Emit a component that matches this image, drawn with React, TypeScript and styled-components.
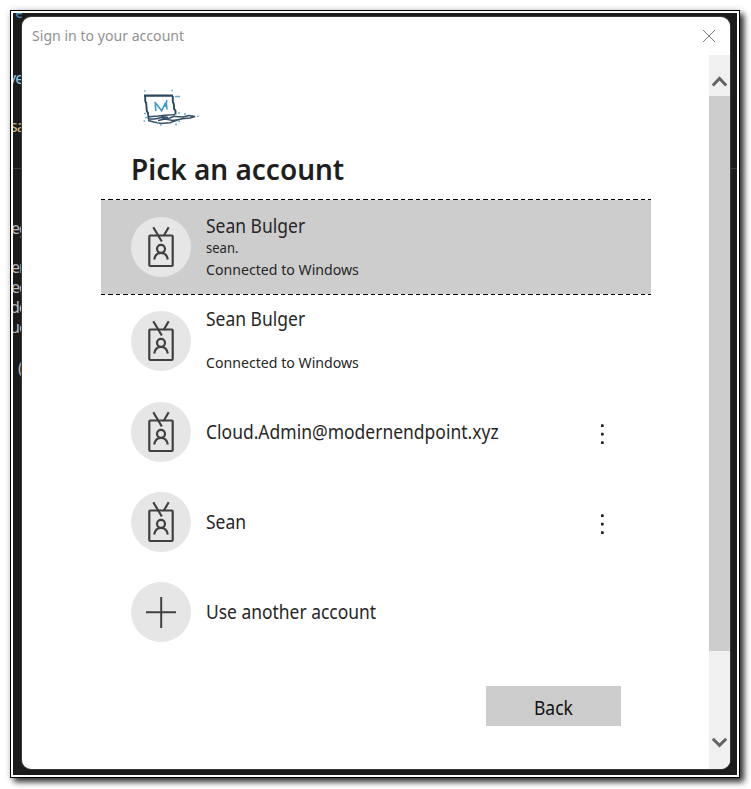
import React from "react";
import styled, { createGlobalStyle } from "styled-components";

const GlobalStyle = createGlobalStyle`
  *, *::before, *::after { box-sizing: border-box; }
  body { margin: 0; background: #fff; font-family: "Noto Sans", "Open Sans", sans-serif; color: #262626; }
  svg { display: block; }
`;

const Page = styled.div`
  width: 751px;
  height: 789px;
  padding: 10px 0 0 10px;
  overflow: hidden;
`;

const Frame = styled.div`
  width: 730px;
  height: 768px;
  padding: 2px;
  border: 1px solid #000;
  background: #fff;
  box-shadow: 4px 4px 6px rgba(0, 0, 0, 0.8), 0 0 7px rgba(0, 0, 0, 0.16);
`;

const Desktop = styled.div`
  display: grid;
  grid-template-columns: 9px 708px 7px;
  height: 762px;
  background: linear-gradient(#1b1b1b, #1b1b1b 155px, #3c3c3c 155px, #3c3c3c 156px, #1b1b1b 156px);
`;

const CodeEdge = styled.div`
  overflow: hidden;
`;

const Fragment = styled.div<{ $gap: number; $shift: number; $color?: string }>`
  margin-top: ${(p) => p.$gap}px;
  margin-left: ${(p) => p.$shift}px;
  height: 20px;
  font: 16px/20px "Noto Sans", sans-serif;
  letter-spacing: -1px;
  white-space: nowrap;
  color: ${(p) => p.$color ?? "#b9b9b9"};
`;

const Dialog = styled.section`
  display: flex;
  flex-direction: column;
  height: 752px;
  margin-top: 4px;
  border-radius: 9px;
  background: #fff;
  box-shadow: 0 0 0 1px #393939;
  overflow: hidden;
`;

const TitleBar = styled.header`
  display: flex;
  align-items: center;
  justify-content: space-between;
  flex: none;
  height: 38px;
  padding: 0 15px 0 10px;
  color: #919191;
`;

const Text = styled.div<{ $size: number; $line: number; $scale: number; $weight?: number }>`
  width: max-content;
  font-size: ${(p) => p.$size}px;
  line-height: ${(p) => p.$line}px;
  font-weight: ${(p) => p.$weight ?? 400};
  white-space: nowrap;
  transform: scaleX(${(p) => p.$scale});
  transform-origin: left center;
`;

const TitleText = styled(Text)`
  margin-top: -2px;
`;

const Body = styled.div`
  display: flex;
  flex: 1;
`;

const Content = styled.main`
  width: 687px;
  padding: 34px 58px 0 79px;
`;

const Heading = styled.div`
  margin: 23px 0 0 30px;
  height: 49px;
  color: #1f1f1f;
`;

const Logo = styled.div`
  margin-left: 38px;
`;

const Tile = styled.div<{ $height: number; $selected?: boolean }>`
  display: flex;
  align-items: center;
  height: ${(p) => p.$height}px;
  padding-left: 30px;
  padding-right: 46px;
  background: ${(p) =>
    p.$selected
      ? `repeating-linear-gradient(90deg, #000 0 4.5px, #fff 4.5px 7.5px) top / 100% 1px no-repeat,
         repeating-linear-gradient(90deg, #000 0 4.5px, #fff 4.5px 7.5px) bottom / 100% 1px no-repeat, #cdcdcd`
      : "transparent"};
`;

const Avatar = styled.div`
  display: grid;
  place-items: center;
  flex: none;
  width: 60px;
  height: 60px;
  margin-right: 15px;
  border-radius: 50%;
  background: #e6e6e6;
`;

const Details = styled.div`
  flex: 1;
`;

const EmptyLine = styled.div`
  height: 20px;
`;

const Actions = styled.footer`
  display: flex;
  justify-content: flex-end;
  padding: 29px 30px 0 0;
`;

const Button = styled.button`
  display: flex;
  justify-content: center;
  align-items: center;
  width: 135px;
  height: 40px;
  padding: 3px 0 0 4px;
  border: 0;
  background: #ccc;
  color: #111;
  font-family: inherit;
`;

const Scrollbar = styled.div`
  display: flex;
  flex-direction: column;
  justify-content: space-between;
  width: 21px;
  background: #f0f0f0;
`;

const ScrollArrow = styled.div<{ $height: number }>`
  height: ${(p) => p.$height}px;
`;

const Thumb = styled.div`
  height: 555px;
  margin-bottom: auto;
  background: #cdcdcd;
`;

const BadgeIcon = () => (
  <svg width="60" height="60" viewBox="0 0 60 60" fill="none" stroke="#404040" strokeWidth="2.2">
    <rect x="18.3" y="18.5" width="23.4" height="30.5" rx="1" />
    <path d="M22.3 10.3 30.8 24.5M37.7 10.3 32.6 19" />
    <circle cx="30" cy="31.8" r="4" />
    <path d="M23.2 42.5C23.8 38.5 26.3 36 30 36S36.2 38.5 36.8 42.5" />
  </svg>
);

const PlusIcon = () => (
  <svg width="60" height="60" viewBox="0 0 60 60" stroke="#404040" strokeWidth="2">
    <path d="M15 30.2h30M30.2 15v31" />
  </svg>
);

const MoreIcon = () => (
  <svg width="6" height="26" viewBox="0 0 6 26" fill="#222">
    <rect x="2" y="5.3" width="2.7" height="2.7" rx=".6" />
    <rect x="2" y="13.8" width="2.7" height="2.7" rx=".6" />
    <rect x="2" y="22.3" width="2.7" height="2.7" rx=".6" />
  </svg>
);

const CloseIcon = () => (
  <svg width="12" height="12" viewBox="0 0 12 12" stroke="#7c7c7c">
    <path d="M0 0 12 12M12 0 0 12" />
  </svg>
);

const LaptopLogo = () => (
  <svg width="62" height="38" viewBox="0 0 62 38" fill="none">
    <path d="M5 6.7h29" stroke="#29475f" strokeWidth="2.2" />
    <path d="M6.2 6v6l1 2 .6 8 1.2 2 .6 6M33.8 7v6l1 2 .3 5 1.4 1.5v4" stroke="#29475f" strokeWidth="1.9" />
    <path d="M10 27.8l9-.8 7-.8 10-.6M9 30h7l6-1.5 6 1.5 8-3M36 27.5l8 .5 6-1.5 6 1-5 1.5-8 .8-6 1.7-6 2.2-9 .8-7-1.5-6-1.5M19 31.5l7-1.5 8 1.5 9-1.5M22 27l7 1.5" stroke="#344e65" strokeWidth="1.4" />
    <path d="M16.8 22l-.6-9.2M17 14.5l5.7 7.3 3.8-8M26.5 18l1.4-7M27.2 13l.8 7.5" stroke="#3d9acb" strokeWidth="1.6" />
    <path d="M5 2h1.5M32.5 1.5H34M36 7.5h5M5 24.5h2M4.5 32H6M6 28.5h3M18 34h2M21 36h1.5M36 35.5h2M39 24h2M58 27.3h2M45 25h2M39 32h2" stroke="#6aabd2" strokeWidth="1.3" />
  </svg>
);

const Chevron = ({ down = false }: { down?: boolean }) => (
  <svg width="21" height="41" viewBox="0 0 21 41" fill="none" stroke="#646464" strokeWidth="3">
    <path d={down ? "M3.8 10.7 10.5 17.3l6.7-6.6" : "M3.8 30.5 10.5 23.5l6.7 7"} />
  </svg>
);

type Account = {
  name: string;
  height: number;
  status?: string;
  login?: string;
  selected?: boolean;
  more?: boolean;
};

const accounts: Account[] = [
  { name: "Sean Bulger", height: 96, login: "sean.", status: "Connected to Windows", selected: true },
  { name: "Sean Bulger", height: 91, login: "", status: "Connected to Windows" },
  { name: "Cloud.Admin@modernendpoint.xyz", height: 91, more: true },
  { name: "Sean", height: 90, more: true },
];

const fragments = [
  { text: "et", gap: -11, shift: 2, color: "#3f86bd" },
  { text: "ve", gap: 46, shift: -5, color: "#8cc8e8" },
  { text: "sa", gap: 28, shift: -3, color: "#cdb877" },
  { text: "eg", gap: 82, shift: -2 },
  { text: "er", gap: 19, shift: -2 },
  { text: "ed", gap: 0, shift: -2 },
  { text: "de", gap: 0, shift: -3 },
  { text: "ue", gap: 0, shift: -3 },
  { text: "(", gap: 21, shift: 5 },
];

export default function App() {
  return (
    <Page>
      <GlobalStyle />
      <Frame>
        <Desktop>
          <CodeEdge>
            {fragments.map((f) => (
              <Fragment key={f.text} $gap={f.gap} $shift={f.shift} $color={f.color}>
                {f.text}
              </Fragment>
            ))}
          </CodeEdge>
          <Dialog>
            <TitleBar>
              <TitleText $size={15} $line={20} $scale={0.94}>Sign in to your account</TitleText>
              <CloseIcon />
            </TitleBar>
            <Body>
              <Content>
                <Logo><LaptopLogo /></Logo>
                <Heading>
                  <Text $size={28.5} $line={38} $scale={0.982} $weight={600}>Pick an account</Text>
                </Heading>
                {accounts.map((a, i) => (
                  <Tile key={i} $height={a.height} $selected={a.selected}>
                    <Avatar><BadgeIcon /></Avatar>
                    <Details>
                      <Text $size={19} $line={24} $scale={0.92}>{a.name}</Text>
                      {a.login !== undefined &&
                        (a.login ? <Text $size={14} $line={20} $scale={0.93}>{a.login}</Text> : <EmptyLine />)}
                      {a.status && <Text $size={14.5} $line={23} $scale={0.975}>{a.status}</Text>}
                    </Details>
                    {a.more && <MoreIcon />}
                  </Tile>
                ))}
                <Tile $height={90}>
                  <Avatar><PlusIcon /></Avatar>
                  <Text $size={19} $line={24} $scale={0.917}>Use another account</Text>
                </Tile>
                <Actions>
                  <Button><Text $size={19} $line={24} $scale={0.92}>Back</Text></Button>
                </Actions>
              </Content>
              <Scrollbar>
                <ScrollArrow $height={41}><Chevron /></ScrollArrow>
                <Thumb />
                <ScrollArrow $height={41}><Chevron down /></ScrollArrow>
              </Scrollbar>
            </Body>
          </Dialog>
        </Desktop>
      </Frame>
    </Page>
  );
}
